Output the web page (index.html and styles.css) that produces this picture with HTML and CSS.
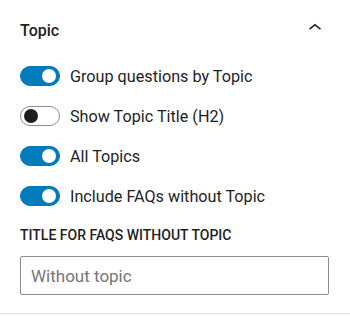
FILE: index.html
```html
<!DOCTYPE html>
<html lang="en">
<head>
    <meta charset="UTF-8">
    <meta name="viewport" content="width=device-width, initial-scale=1.0">
    <title>Topic Settings</title>
    <link rel="stylesheet" href="styles.css">
</head>
<body>

<div class="panel">
    <div class="panel-header">
        <h2 class="panel-title">Topic</h2>
        <svg class="chevron" viewBox="0 0 24 24" width="26" height="26" aria-hidden="true">
            <path d="M6.5 12.4L12 8l5.5 4.4-.9 1.2L12 10l-4.6 3.6-.9-1.2z"></path>
        </svg>
    </div>

    <div class="panel-body">
        <label class="toggle-row">
            <span class="toggle is-on"><span class="thumb"></span></span>
            <span class="toggle-label">Group questions by Topic</span>
        </label>
        <label class="toggle-row">
            <span class="toggle"><span class="thumb"></span></span>
            <span class="toggle-label">Show Topic Title (H2)</span>
        </label>
        <label class="toggle-row">
            <span class="toggle is-on"><span class="thumb"></span></span>
            <span class="toggle-label">All Topics</span>
        </label>
        <label class="toggle-row">
            <span class="toggle is-on"><span class="thumb"></span></span>
            <span class="toggle-label">Include FAQs without Topic</span>
        </label>

        <div class="field">
            <label class="field-label" for="no-topic-title">Title for FAQs without Topic</label>
            <input class="text-input" id="no-topic-title" type="text" placeholder="Without topic">
        </div>
    </div>
</div>

</body>
</html>
```

FILE: styles.css
```css
body {
    margin: 0;
    background-color: #fff;
    font-family: Roboto, "Noto Sans", sans-serif;
    color: #1e1e1e;
}
.panel {
    border-bottom: 1px solid #e0e0e0;
    height: 314px;
    box-sizing: border-box;
}
.panel-header {
    display: flex;
    align-items: center;
    justify-content: space-between;
    height: 60px;
    padding: 0 22px 0 20px;
}
.panel-title {
    margin: 0;
    font-size: 16px;
    font-weight: 500;
}
.chevron {
    fill: #1e1e1e;
    margin-top: -4px;
}
.panel-body {
    padding: 6px 21px 0 20px;
}

/* Toggle rows */
.toggle-row {
    display: flex;
    align-items: center;
    height: 20px;
    margin-bottom: 20px;
}
.toggle {
    position: relative;
    width: 40px;
    height: 20px;
    box-sizing: border-box;
    border: 1px solid #8c8c8c;
    border-radius: 10px;
    background-color: #fff;
    margin-right: 10px;
    flex-shrink: 0;
}
.toggle .thumb {
    position: absolute;
    top: 2px;
    left: 3px;
    width: 14px;
    height: 14px;
    border-radius: 50%;
    background-color: #1e1e1e;
}
.toggle.is-on {
    background-color: #007cba;
    border-color: #007cba;
}
.toggle.is-on .thumb {
    left: auto;
    right: 3px;
    background-color: #fff;
}
.toggle-label {
    font-size: 16.2px;
}

/* Text field */
.field {
    padding-top: 1px;
}
.field-label {
    display: block;
    font-size: 14px;
    font-weight: 500;
    text-transform: uppercase;
    line-height: 16px;
    margin-bottom: 13px;
}
.text-input {
    display: block;
    width: 100%;
    height: 39px;
    box-sizing: border-box;
    border: 1px solid #8c8c8c;
    border-radius: 2px;
    padding: 0 10px;
    font-family: Roboto, "Noto Sans", sans-serif;
    font-size: 17px;
    color: #1e1e1e;
}
.text-input::placeholder {
    color: #757575;
}
```
